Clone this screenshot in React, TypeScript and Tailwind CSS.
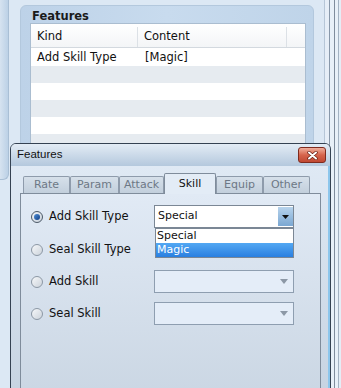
import React from "react";

function Radio({ checked }: { checked?: boolean }) {
  return (
    <div
      className={
        "w-[12px] h-[12px] rounded-full border flex items-center justify-center shrink-0 " +
        (checked
          ? "border-[#4d5a68] bg-gradient-to-br from-[#f2f5f8] to-[#c9d2dc]"
          : "border-[#8c98a5] bg-gradient-to-br from-[#f6f8fa] to-[#ccd3db]")
      }
    >
      {checked && (
        <div className="w-[6px] h-[6px] rounded-full bg-gradient-to-br from-[#4f8fd6] to-[#123f86]" />
      )}
    </div>
  );
}

function Tab({ label, active, w }: { label: string; active?: boolean; w: string }) {
  if (active) {
    return (
      <div
        className={
          w +
          " relative z-10 h-[21px] -mb-px border-l border-t border-r border-[#7f8c9b] bg-[#e3ecf6] rounded-t-[2px] flex items-center justify-center text-[11px] text-[#111]"
        }
      >
        {label}
      </div>
    );
  }
  return (
    <div
      className={
        w +
        " h-[17px] pt-px border-l border-t border-r border-[#8e9bab] bg-gradient-to-b from-[#d6e0ea] to-[#c2cfdc] rounded-t-[2px] flex items-center justify-center text-[11px] text-[#6d7885]"
      }
    >
      {label}
    </div>
  );
}

function DisabledSelect() {
  return (
    <div className="w-[140px] h-[23px] border border-[#8e9eb0] bg-[#e4edf8] flex items-center justify-end pr-[5px]">
      <svg width="8" height="5" viewBox="0 0 8 5">
        <path d="M0 0 L8 0 L4 5 Z" fill="#8c98a6" />
      </svg>
    </div>
  );
}

export default function App() {
  return (
    <div className="relative w-[341px] h-[388px] overflow-hidden bg-[#dce8f4] font-['DejaVu_Sans',sans-serif] text-[#111]">
      {/* background editor layer */}
      <div className="flex h-full">
        <div className="w-[9px] flex flex-col">
          <div className="h-[180px] bg-gradient-to-r from-[#d6e3f0] to-[#bcd1e6] border-r border-b border-[#a9bfd5] rounded-br-[6px]" />
        </div>
        <div className="w-[11px]" />
        <div className="w-[294px] mt-[5px] rounded-t-[6px] border border-[#b3c8dd] bg-gradient-to-r from-[#bdd2e8] via-[#c8dbee] to-[#bfd4e9] pl-[9px] flex flex-col">
          <div className="h-[17px] pl-[2px] pt-[3px] text-[11.5px] font-bold leading-[14px] text-[#1a1a1a]">
            Features
          </div>
          <div className="w-[276px] border border-[#aabdd0] bg-white flex flex-col">
            <div className="h-[24px] pt-[3px] flex border-b border-[#d3d9df] bg-gradient-to-b from-[#ffffff] to-[#f3f5f7] text-[11.5px]">
              <div className="w-[107px] pl-[6px] flex items-center border-r border-[#dce1e6]">Kind</div>
              <div className="w-[149px] pl-[6px] flex items-center border-r border-[#dce1e6]">Content</div>
              <div className="flex-1" />
            </div>
            <div className="h-[18px] pt-[2px] flex text-[11.5px]">
              <div className="w-[107px] pl-[6px] flex items-center">Add Skill Type</div>
              <div className="pl-[7px] flex items-center">[Magic]</div>
            </div>
            <div className="h-[17px] bg-[#e6ebf0]" />
            <div className="h-[17px] bg-white" />
            <div className="h-[17px] bg-[#e6ebf0]" />
            <div className="h-[17px] bg-white" />
            <div className="h-[17px] bg-[#e6ebf0]" />
            <div className="h-[17px] bg-white" />
          </div>
        </div>
        <div className="flex-1 flex">
          <div className="w-[10px]" />
          <div className="w-px bg-[#b6c6d7]" />
          <div className="w-[4px] bg-[#e6eef7]" />
          <div className="w-px bg-[#8898aa]" />
          <div className="w-[4px] bg-[#e8f0f8]" />
          <div className="w-px bg-[#7f8c9c]" />
          <div className="w-[3px] bg-[#e8f0f8]" />
          <div className="w-px bg-[#a3b2c2]" />
          <div className="flex-1 bg-[#e4edf6]" />
        </div>
      </div>

      {/* dialog */}
      <div className="absolute left-[10px] top-[143px] w-[321px] h-[260px] rounded-t-[6px] border border-[#354252] flex flex-col overflow-hidden">
        <div className="h-[22px] shrink-0 bg-gradient-to-b from-[#e3ecf5] to-[#b4c8dd] flex items-center justify-between pl-[6px] pr-[4px]">
          <span className="font-['Liberation_Sans',sans-serif] text-[11.5px] text-[#111] leading-none">Features</span>
          <div className="w-[28px] h-[16px] rounded-[3px] border border-[#7e2b1e] bg-gradient-to-b from-[#efae9c] via-[#d6644c] to-[#c04832] flex items-center justify-center">
            <svg width="11" height="9" viewBox="0 0 11 9">
              <path d="M2 1.5 L9 7.5 M9 1.5 L2 7.5" stroke="#6a2015" strokeWidth="3.4" strokeLinecap="round" />
              <path d="M2 1.5 L9 7.5 M9 1.5 L2 7.5" stroke="#ffffff" strokeWidth="2" strokeLinecap="round" />
            </svg>
          </div>
        </div>
        <div className="flex-1 bg-gradient-to-b from-[#dfe9f4] to-[#c6d3e1] border-r-2 border-[#8cc6ec] pl-[9px] pt-[7px] flex flex-col">
          <div className="flex items-end h-[20px] pl-[3px]">
            <Tab label="Rate" w="w-[47px]" />
            <Tab label="Param" w="w-[49px]" />
            <Tab label="Attack" w="w-[45px]" />
            <Tab label="Skill" w="w-[52px]" active />
            <Tab label="Equip" w="w-[47px]" />
            <Tab label="Other" w="w-[47px]" />
          </div>
          <div className="w-[301px] flex-1 border border-[#7f8c9b] bg-gradient-to-b from-[#e1eaf5] to-[#cad6e3] pl-[10px] pt-[11px] flex flex-col">
            <div className="h-[23px] flex items-center">
              <div className="w-[123px] flex items-center gap-[6px] text-[11.5px]">
                <Radio checked />
                <span>Add Skill Type</span>
              </div>
              <div className="relative w-[140px] h-[23px] border border-[#7b8795] bg-white flex items-center">
                <span className="flex-1 pl-[3px] text-[11px]">Special</span>
                <div className="w-[15px] h-[19px] bg-gradient-to-b from-[#b7d3ec] to-[#7aa7d2] flex items-center justify-center">
                  <svg width="7" height="4" viewBox="0 0 7 4">
                    <path d="M0 0 L7 0 L3.5 4 Z" fill="#111" />
                  </svg>
                </div>
                <div className="absolute left-0 top-[22px] w-[139px] z-20 border border-[#7b8795] bg-white flex flex-col text-[11px]">
                  <div className="h-[14px] pl-[1px] flex items-center">Special</div>
                  <div className="h-[14px] pl-[1px] flex items-center text-white bg-gradient-to-b from-[#53a8f3] to-[#2a7fe0]">Magic</div>
                </div>
              </div>
            </div>
            <div className="h-[23px] mt-[10px] flex items-center">
              <div className="w-[123px] flex items-center gap-[6px] text-[11.5px]">
                <Radio />
                <span>Seal Skill Type</span>
              </div>
            </div>
            <div className="h-[23px] mt-[9px] flex items-center">
              <div className="w-[123px] flex items-center gap-[6px] text-[11.5px]">
                <Radio />
                <span>Add Skill</span>
              </div>
              <DisabledSelect />
            </div>
            <div className="h-[23px] mt-[9px] flex items-center">
              <div className="w-[123px] flex items-center gap-[6px] text-[11.5px]">
                <Radio />
                <span>Seal Skill</span>
              </div>
              <DisabledSelect />
            </div>
          </div>
        </div>
      </div>
    </div>
  );
}
